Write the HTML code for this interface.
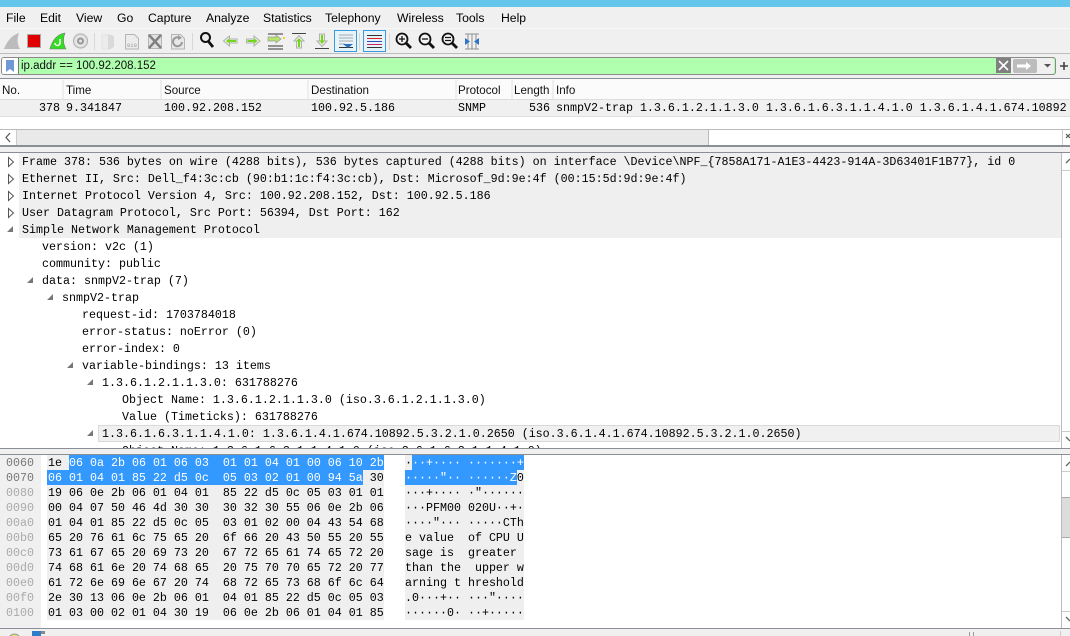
<!DOCTYPE html>
<html><head><meta charset="utf-8"><style>
html,body{margin:0;padding:0;background:#fff}
#p{position:relative;width:1070px;height:636px;overflow:hidden;background:#fff;font-family:"Liberation Sans",sans-serif;color:#000}
#p div,#p span.a{position:absolute}
.m{top:11px;font-size:12.2px;line-height:14px;white-space:pre;color:#000}
.h{top:84px;font-size:11.6px;line-height:14px;color:#111;white-space:pre}
.t{font-family:"Liberation Mono",monospace;font-size:11.67px;line-height:17px;height:17px;white-space:pre;color:#000}
#tree .t{margin-top:1px}
.x{font-family:"Liberation Mono",monospace;font-size:11.67px;line-height:15px;height:15px;white-space:pre;color:#000;margin-top:1px}
.o{left:6px;color:#aaa}
.g{left:19px;width:1042px;height:17px;background:#efefef}
.s{background:#3399ff;height:15px}
svg{position:absolute;left:0;top:0}
</style></head><body><div id="p">
<div style="left:0;top:0;width:1070px;height:7px;background:#63c6ea"></div>
<div style="left:0;top:7px;width:1070px;height:47px;background:#f0f0f0"></div>
<div style="left:0;top:28px;width:1070px;height:1px;background:#f8f8f8"></div>
<div style="left:0;top:53px;width:1070px;height:1px;background:#bdbdbd"></div>
<div style="left:0;top:54px;width:1070px;height:24px;background:#f0f0f0"></div>
<div class="m" style="left:6px">File</div><div class="m" style="left:40px">Edit</div><div class="m" style="left:76px">View</div><div class="m" style="left:117px">Go</div><div class="m" style="left:148px">Capture</div><div class="m" style="left:206px">Analyze</div><div class="m" style="left:263px">Statistics</div><div class="m" style="left:325px">Telephony</div><div class="m" style="left:397px">Wireless</div><div class="m" style="left:456px">Tools</div><div class="m" style="left:501px">Help</div>

<svg width="1070" height="56" viewBox="0 0 1070 56">
<path d="M4 49C7 41 12 35 19 33C17 39 17 44 20 49Z" fill="#bcbcbc"/>
<rect x="27.500" y="34.500" width="13" height="13" fill="#e00000" stroke="#aaa"/>
<path d="M50 49C52 41 57 34 65 33C63 38 63 44 66 49Z" fill="#33dd22" stroke="#777" stroke-width=".6"/>
<path d="M60 39v4a2.500 2.500 0 0 1-5 0" fill="none" stroke="#fff" stroke-width="1.500"/>
<circle cx="80.500" cy="41" r="7" fill="#e4e4e4" stroke="#b5b5b5" stroke-width="1.200"/><circle cx="80.500" cy="41" r="3.500" fill="#999"/><circle cx="80.500" cy="41" r="1.500" fill="#e4e4e4"/>
<rect x="94" y="33" width="1" height="17" fill="#d8d8d8"/>
<path d="M102 35h6l4 1v12l-4 1h-6z" fill="#ececec" stroke="#e2e2e2"/><path d="M108 34l6 2v11l-6 3z" fill="#dadada"/>
<path d="M125.500 34.500h9l4 4v10.500h-13z" fill="#ececec" stroke="#b5b5b5"/><text x="127" y="47" font-family="Liberation Mono,monospace" font-size="5.500" fill="#999">010</text>
<rect x="148.500" y="34.500" width="13" height="14" fill="#e2e2e2" stroke="#b5b5b5"/><path d="M149 35l12 13M161 35l-12 13" stroke="#808080" stroke-width="2.400"/>
<path d="M171.500 34.500h9l4 4v10.500h-13z" fill="#e8e8e8" stroke="#b5b5b5"/><path d="M182 42a4.500 4.500 0 1 1-2-4" fill="none" stroke="#999" stroke-width="2"/><path d="M178 35l4 3-4 2z" fill="#999"/>
<rect x="192" y="33" width="1" height="17" fill="#d8d8d8"/>
<circle cx="205.500" cy="37.500" r="4.500" fill="#eee" stroke="#111" stroke-width="2"/><path d="M208.500 41.500l4.500 5.500" stroke="#111" stroke-width="2.800"/>
<path d="M223.500 41l6-5v3h7.500v4h-7.500v3z" fill="#e8efdc" stroke="#b0b0b0"/><path d="M226 41l3.500-2.800v1.800h6.500v2h-6.500v1.800z" fill="#74d51f"/>
<path d="M260 41l-6-5v3h-7.500v4h7.500v3z" fill="#e8efdc" stroke="#b0b0b0"/><path d="M257.500 41l-3.500-2.800v1.800h-6.500v2h6.500v1.800z" fill="#74d51f"/>
<path d="M268 34h15M268 46h15M268 49h15" stroke="#333" fill="none"/><path d="M268 37h8v-2l5 4-5 4v-2h-8z" fill="#b6e36a" stroke="#999" stroke-width=".7"/><rect x="283" y="37" width="2" height="2" fill="#f4d22e"/>
<path d="M292 33.500h14" stroke="#444"/><path d="M299 35.500l5 5.500h-2.500v7h-5v-7h-2.500z" fill="#e8efdc" stroke="#b0b0b0"/><path d="M299 38l2.800 3.500h-1.800v5.500h-2v-5.500h-1.800z" fill="#74d51f"/>
<path d="M315 48.500h14" stroke="#444"/><path d="M322 46.500l5-5.500h-2.500v-7h-5v7h-2.500z" fill="#e8efdc" stroke="#b0b0b0"/><path d="M322 44l2.800-3.500h-1.800v-5.500h-2v5.500h-1.800z" fill="#74d51f"/>
<rect x="334.500" y="30.500" width="22" height="21" fill="#e5f3fb" stroke="#3a9bdc"/>
<path d="M339 35h14M339 38h14M339 41h14M339 44h6" stroke="#aaa"/><path d="M339 47.500h14" stroke="#333"/><path d="M343 44h10l-5 4z" fill="#2c6fc0"/>
<rect x="359" y="33" width="1" height="17" fill="#d8d8d8"/>
<rect x="363.500" y="30.500" width="22" height="21" fill="#e5f3fb" stroke="#3a9bdc"/>
<path d="M367 35.500h15" stroke="#333"/><path d="M367 38.500h15" stroke="#e02020"/><path d="M367 41.500h15" stroke="#2c4fc0"/><path d="M367 44.500h15" stroke="#d02060"/><path d="M367 47.500h15" stroke="#333"/>
<rect x="389" y="33" width="1" height="17" fill="#d8d8d8"/>
<circle cx="402" cy="39" r="5.500" fill="#f4f4f4" stroke="#111" stroke-width="1.800"/><path d="M406 43l5 5" stroke="#111" stroke-width="2.800"/><path d="M399 39h6M402 36v6" stroke="#111" stroke-width="1.300"/>
<circle cx="425" cy="39" r="5.500" fill="#f4f4f4" stroke="#111" stroke-width="1.800"/><path d="M429 43l5 5" stroke="#111" stroke-width="2.800"/><path d="M422 39h6" stroke="#111" stroke-width="1.300"/>
<circle cx="448" cy="39" r="5.500" fill="#f4f4f4" stroke="#111" stroke-width="1.800"/><path d="M452 43l5 5" stroke="#111" stroke-width="2.800"/><path d="M445 37.500h6M445 40.500h6" stroke="#111" stroke-width="1.200"/>
<path d="M465 34h14M465 49h14M468 34v15M472 34v15M476 34v15" stroke="#777" stroke-width=".8" fill="none"/><path d="M465 38l5 3.500-5 3.500zM479 38l-5 3.500 5 3.500z" fill="#2f74c8"/>
</svg>

<!-- filter -->
<div style="left:1px;top:57px;width:1053px;height:16px;border:1px solid #8a8a8a;border-radius:3px;background:#afffaf"></div>
<div style="left:2px;top:58px;width:16px;height:16px;background:#fff;border-right:1px solid #777;border-radius:2px 0 0 2px"></div>
<svg width="20" height="76" viewBox="0 0 20 76"><path d="M6 60h8v12l-4-3-4 3z" fill="#7199d6"/></svg>
<div style="left:21px;top:59px;font-size:11.5px;line-height:14px;color:#111;white-space:pre">ip.addr == 100.92.208.152</div>
<div style="left:1011px;top:58px;width:43px;height:16px;background:#f0f0f0;border-radius:0 3px 3px 0"></div>
<div style="left:996px;top:58px;width:15px;height:15px;background:#808080"></div>
<svg width="1070" height="76" viewBox="0 0 1070 76">
<path d="M999 61l9 9M1008 61l-9 9" stroke="#fff" stroke-width="1.600"/>
<rect x="1013" y="59" width="24" height="14" rx="2" fill="#bcbcbc"/>
<path d="M1017 64.500h9v-2.500l5 4-5 4v-2.500h-9z" fill="#fff"/>
<path d="M1044 64h7l-3.500 3.500z" fill="#555"/>
<path d="M1060 66h8M1064 62v8" stroke="#444" stroke-width="1.600"/>
</svg>

<!-- packet list -->
<div style="left:0;top:78px;width:1070px;height:1px;background:#8a8f96"></div>
<div style="left:0;top:79px;width:1070px;height:21px;background:#fbfbfb"></div>
<div style="left:62px;top:80px;width:2px;height:20px;background:#eee"></div><div style="left:160px;top:80px;width:2px;height:20px;background:#eee"></div><div style="left:307px;top:80px;width:2px;height:20px;background:#eee"></div><div style="left:455px;top:80px;width:2px;height:20px;background:#eee"></div><div style="left:511px;top:80px;width:2px;height:20px;background:#eee"></div><div style="left:552px;top:80px;width:2px;height:20px;background:#eee"></div>
<div class="h" style="left:2px">No.</div><div class="h" style="left:66px">Time</div><div class="h" style="left:164px">Source</div><div class="h" style="left:311px">Destination</div><div class="h" style="left:458px">Protocol</div><div class="h" style="left:514px">Length</div><div class="h" style="left:556px">Info</div>
<div style="left:0;top:99px;width:1070px;height:18px;background:#f0f0f0;border-top:1px solid #ddd;border-bottom:1px solid #ddd;box-sizing:border-box"></div>
<div class="t" style="left:39px;top:100px">378</div><div class="t" style="left:66px;top:100px">9.341847</div><div class="t" style="left:164px;top:100px">100.92.208.152</div><div class="t" style="left:311px;top:100px">100.92.5.186</div><div class="t" style="left:458px;top:100px">SNMP</div><div class="t" style="left:529px;top:100px">536</div>
<div class="t" style="left:556px;top:100px;width:512px;overflow:hidden">snmpV2-trap 1.3.6.1.2.1.1.3.0 1.3.6.1.6.3.1.1.4.1.0 1.3.6.1.4.1.674.10892.5.3.2</div>

<div style="left:0;top:129px;width:1070px;height:1px;background:#bbb"></div>
<div style="left:16px;top:130px;width:692px;height:15px;background:#e9e9e9;border-right:1px solid #bbb"></div>
<div style="left:16px;top:130px;width:1px;height:15px;background:#ccc"></div>
<div style="left:1062px;top:130px;width:1px;height:15px;background:#ccc"></div>
<svg width="1070" height="150" viewBox="0 0 1070 150"><path d="M10 133l-4 4.500 4 4.500" fill="none" stroke="#555" stroke-width="1.200"/><path d="M1066 134l4 4M1070 134l-4 4" stroke="#555" stroke-width="1.200"/></svg>
<div style="left:0;top:145px;width:1070px;height:2px;background:#8a8f96"></div>
<div style="left:0;top:147px;width:1070px;height:5px;background:#f0f0f0"></div>
<div style="left:0;top:152px;width:1070px;height:1px;background:#8a8f96"></div>

<!-- tree -->
<div id="tree" style="left:0;top:153px;width:1061px;height:295px;overflow:hidden">
<div class="g" style="top:0"></div><div class="g" style="top:17px"></div><div class="g" style="top:34px"></div><div class="g" style="top:51px"></div><div class="g" style="top:68px"></div>
<div class="t" style="left:22px;top:0">Frame 378: 536 bytes on wire (4288 bits), 536 bytes captured (4288 bits) on interface \Device\NPF_{7858A171-A1E3-4423-914A-3D63401F1B77}, id 0</div>
<div class="t" style="left:22px;top:17px">Ethernet II, Src: Dell_f4:3c:cb (90:b1:1c:f4:3c:cb), Dst: Microsof_9d:9e:4f (00:15:5d:9d:9e:4f)</div>
<div class="t" style="left:22px;top:34px">Internet Protocol Version 4, Src: 100.92.208.152, Dst: 100.92.5.186</div>
<div class="t" style="left:22px;top:51px">User Datagram Protocol, Src Port: 56394, Dst Port: 162</div>
<div class="t" style="left:22px;top:68px">Simple Network Management Protocol</div>
<div class="t" style="left:42px;top:85px">version: v2c (1)</div>
<div class="t" style="left:42px;top:102px">community: public</div>
<div class="t" style="left:42px;top:119px">data: snmpV2-trap (7)</div>
<div class="t" style="left:62px;top:136px">snmpV2-trap</div>
<div class="t" style="left:82px;top:153px">request-id: 1703784018</div>
<div class="t" style="left:82px;top:170px">error-status: noError (0)</div>
<div class="t" style="left:82px;top:187px">error-index: 0</div>
<div class="t" style="left:82px;top:204px">variable-bindings: 13 items</div>
<div class="t" style="left:102px;top:221px">1.3.6.1.2.1.1.3.0: 631788276</div>
<div class="t" style="left:122px;top:238px">Object Name: 1.3.6.1.2.1.1.3.0 (iso.3.6.1.2.1.1.3.0)</div>
<div class="t" style="left:122px;top:255px">Value (Timeticks): 631788276</div>
<div style="left:98px;top:272px;width:962px;height:17px;box-sizing:border-box;background:#f0f0f0;border:1px solid #d9d9d9"></div>
<div class="t" style="left:102px;top:272px">1.3.6.1.6.3.1.1.4.1.0: 1.3.6.1.4.1.674.10892.5.3.2.1.0.2650 (iso.3.6.1.4.1.674.10892.5.3.2.1.0.2650)</div>
<div class="t" style="left:122px;top:289px">Object Name: 1.3.6.1.6.3.1.1.4.1.0 (iso.3.6.1.6.3.1.1.4.1.0)</div>
</div>
<svg width="120" height="445" viewBox="0 0 120 445">
<path d="M8.500 157.500l5 4.500-5 4.500zM8.500 174.500l5 4.500-5 4.500zM8.500 191.500l5 4.500-5 4.500zM8.500 208.500l5 4.500-5 4.500z" fill="#fff" stroke="#555"/>
<path d="M13 226v6h-6zM33 277v6h-6zM53 294v6h-6zM73 362v6h-6zM93 379v6h-6zM93 430v6h-6z" fill="#777"/>
</svg>
<div style="left:1061px;top:153px;width:1px;height:295px;background:#bbb"></div>
<div style="left:1062px;top:170px;width:8px;height:1px;background:#ccc"></div>
<div style="left:1062px;top:431px;width:8px;height:1px;background:#ccc"></div>
<svg width="1070" height="460" viewBox="0 0 1070 460"><path d="M1066 163l4-4" stroke="#666" stroke-width="1.300"/><path d="M1066 437l4 4" stroke="#666" stroke-width="1.300"/></svg>

<!-- divider -->
<div style="left:0;top:448px;width:1070px;height:1px;background:#8a8f96"></div>
<div style="left:0;top:449px;width:1070px;height:5px;background:#f0f0f0"></div>
<div style="left:0;top:454px;width:1070px;height:1px;background:#8a8f96"></div>

<!-- hex -->
<div style="left:0;top:455px;width:41px;height:173px;background:#f0f0f0"></div>
<div style="left:47px;top:455px;width:337px;height:165px;background:#efefef"></div>
<div style="left:405px;top:455px;width:119px;height:165px;background:#efefef"></div>
<div class="s" style="left:69px;top:455px;width:315px"></div>
<div class="s" style="left:47px;top:470px;width:316px"></div>
<div class="s" style="left:412px;top:455px;width:112px"></div>
<div class="s" style="left:405px;top:470px;width:112px"></div>

<div class="x o" style="top:455px;color:#777">0060</div>
<div class="x o" style="top:470px;color:#777">0070</div>
<div class="x o" style="top:485px">0080</div>
<div class="x o" style="top:500px">0090</div>
<div class="x o" style="top:515px">00a0</div>
<div class="x o" style="top:530px">00b0</div>
<div class="x o" style="top:545px">00c0</div>
<div class="x o" style="top:560px">00d0</div>
<div class="x o" style="top:575px">00e0</div>
<div class="x o" style="top:590px">00f0</div>
<div class="x o" style="top:605px">0100</div>

<div class="x" style="left:48px;top:455px">1e <span style="color:#fff">06 0a 2b 06 01 06 03  01 01 04 01 00 06 10 2b</span></div>
<div class="x" style="left:48px;top:470px"><span style="color:#fff">06 01 04 01 85 22 d5 0c  05 03 02 01 00 94 5a</span> 30</div>
<div class="x" style="left:48px;top:485px">19 06 0e 2b 06 01 04 01  85 22 d5 0c 05 03 01 01</div>
<div class="x" style="left:48px;top:500px">00 04 07 50 46 4d 30 30  30 32 30 55 06 0e 2b 06</div>
<div class="x" style="left:48px;top:515px">01 04 01 85 22 d5 0c 05  03 01 02 00 04 43 54 68</div>
<div class="x" style="left:48px;top:530px">65 20 76 61 6c 75 65 20  6f 66 20 43 50 55 20 55</div>
<div class="x" style="left:48px;top:545px">73 61 67 65 20 69 73 20  67 72 65 61 74 65 72 20</div>
<div class="x" style="left:48px;top:560px">74 68 61 6e 20 74 68 65  20 75 70 70 65 72 20 77</div>
<div class="x" style="left:48px;top:575px">61 72 6e 69 6e 67 20 74  68 72 65 73 68 6f 6c 64</div>
<div class="x" style="left:48px;top:590px">2e 30 13 06 0e 2b 06 01  04 01 85 22 d5 0c 05 03</div>
<div class="x" style="left:48px;top:605px">01 03 00 02 01 04 30 19  06 0e 2b 06 01 04 01 85</div>

<div class="x" style="left:405px;top:455px">·<span style="color:#fff">··+···· ·······+</span></div>
<div class="x" style="left:405px;top:470px"><span style="color:#fff">·····"·· ······Z</span>0</div>
<div class="x" style="left:405px;top:485px">···+···· ·"······</div>
<div class="x" style="left:405px;top:500px">···PFM00 020U··+·</div>
<div class="x" style="left:405px;top:515px">····"··· ·····CTh</div>
<div class="x" style="left:405px;top:530px">e value  of CPU U</div>
<div class="x" style="left:405px;top:545px">sage is  greater </div>
<div class="x" style="left:405px;top:560px">than the  upper w</div>
<div class="x" style="left:405px;top:575px">arning t hreshold</div>
<div class="x" style="left:405px;top:590px">.0···+·· ···"····</div>
<div class="x" style="left:405px;top:605px">······0· ··+·····</div>

<!-- hex scrollbar -->
<div style="left:1061px;top:455px;width:1px;height:173px;background:#bbb"></div>
<div style="left:1062px;top:471px;width:8px;height:1px;background:#ccc"></div>
<div style="left:1062px;top:497px;width:8px;height:41px;background:#dcdcdc;border-top:1px solid #aaa;border-bottom:1px solid #aaa;box-sizing:border-box"></div>
<div style="left:1062px;top:611px;width:8px;height:1px;background:#ccc"></div>
<svg width="1070" height="636" viewBox="0 0 1070 636"><path d="M1066 466l4-4" stroke="#666" stroke-width="1.300"/><path d="M1066 617l4 4" stroke="#666" stroke-width="1.300"/></svg>

<!-- status -->
<div style="left:0;top:628px;width:1070px;height:1px;background:#8a8f96"></div>
<div style="left:0;top:629px;width:1070px;height:7px;background:#f0f0f0"></div>
<svg width="1070" height="636" viewBox="0 0 1070 636">
<circle cx="14.500" cy="640" r="6" fill="#e8e070" stroke="#999"/>
<rect x="32" y="631" width="9" height="6" fill="#2f7cc8"/><rect x="41" y="631" width="4" height="3" fill="#888"/>
<path d="M969.500 632v4M973.500 632v4" stroke="#999"/>
<path d="M1060.500 631v5" stroke="#ccc"/>
</svg>
</div></body></html>
